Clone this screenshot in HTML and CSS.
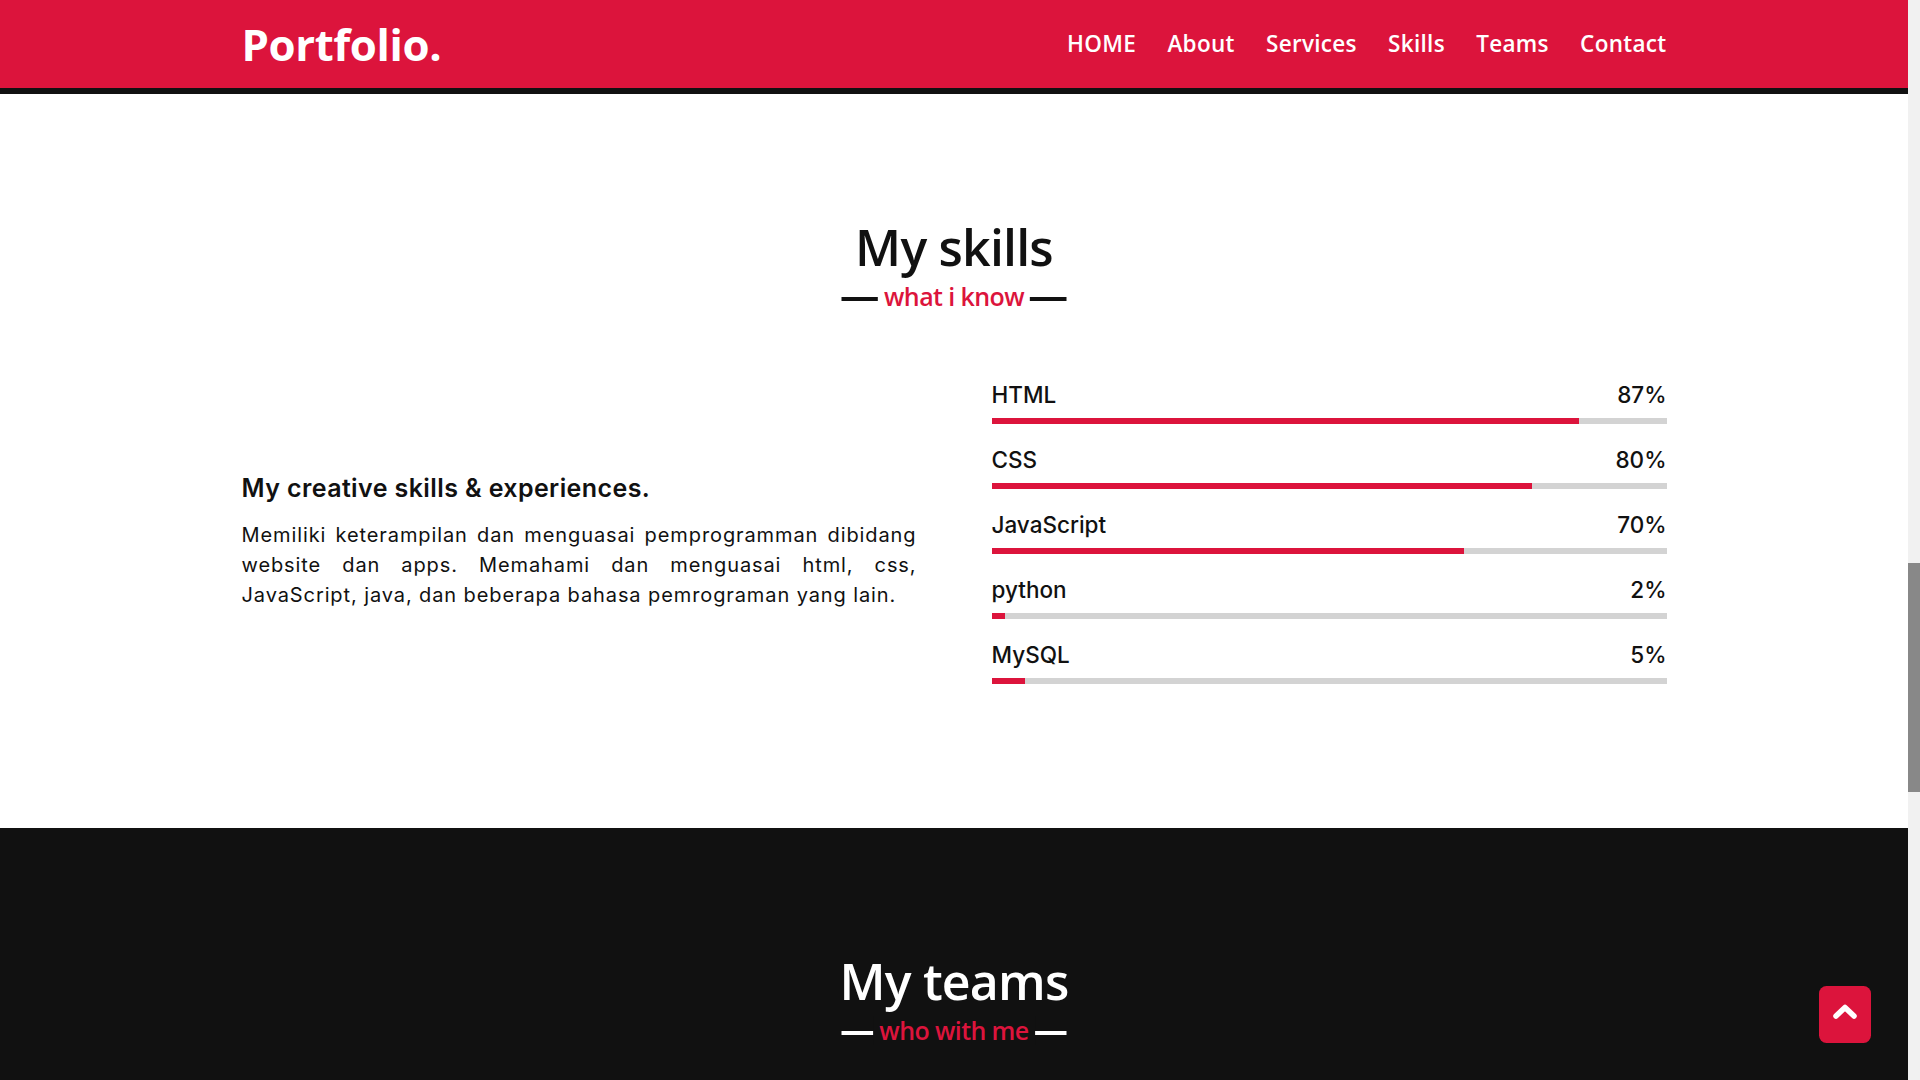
FILE: index.html
```html
<!DOCTYPE html>
<html lang="id">
<head>
<meta charset="utf-8">
<title>Portfolio</title>
<link rel="stylesheet" href="styles.css">
</head>
<body>
<div class="page">
  <nav class="navbar">
    <div class="max-width nav-inner">
      <a class="logo" href="#">Portfolio.</a>
      <ul class="menu">
        <li><a href="#">HOME</a></li>
        <li><a href="#">About</a></li>
        <li><a href="#">Services</a></li>
        <li><a href="#">Skills</a></li>
        <li><a href="#">Teams</a></li>
        <li><a href="#">Contact</a></li>
      </ul>
    </div>
  </nav>

  <section class="skills">
    <div class="max-width">
      <h2 class="title skills-title">My skills</h2>
      <div class="skills-content">
        <div class="column left">
          <div class="text">My creative skills &amp; experiences.</div>
          <p>Memiliki keterampilan dan menguasai pemprogramman dibidang website dan apps. Memahami dan menguasai html, css, JavaScript, java, dan beberapa bahasa pemrograman yang lain.</p>
        </div>
        <div class="column right">
          <div class="bars">
            <div class="info"><span>HTML</span><span>87%</span></div>
            <div class="line"><div class="fill" style="width:87%"></div></div>
          </div>
          <div class="bars">
            <div class="info"><span>CSS</span><span>80%</span></div>
            <div class="line"><div class="fill" style="width:80%"></div></div>
          </div>
          <div class="bars">
            <div class="info"><span>JavaScript</span><span>70%</span></div>
            <div class="line"><div class="fill" style="width:70%"></div></div>
          </div>
          <div class="bars">
            <div class="info"><span>python</span><span>2%</span></div>
            <div class="line"><div class="fill" style="width:2%"></div></div>
          </div>
          <div class="bars">
            <div class="info"><span>MySQL</span><span>5%</span></div>
            <div class="line"><div class="fill" style="width:5%"></div></div>
          </div>
        </div>
      </div>
    </div>
  </section>

  <section class="teams">
    <div class="max-width">
      <h2 class="title teams-title">My teams</h2>
    </div>
  </section>
</div>

<div class="scrollbar"><div class="thumb"></div></div>

<a class="scroll-up" href="#">
  <svg width="52.5" height="56.25" viewBox="0 0 52.5 56.25" aria-hidden="true">
    <polyline points="17,30 26,21.5 35,30" fill="none" stroke="#fff" stroke-width="5.5" stroke-linecap="round" stroke-linejoin="round"/>
  </svg>
</a>
</body>
</html>
```

FILE: styles.css
```css
* {
  margin: 0;
  padding: 0;
  box-sizing: border-box;
}

html, body {
  height: 100%;
}

body {
  font-family: "Inter", "Noto Sans", sans-serif;
  color: #111;
  background: #fff;
  overflow: hidden;
  padding-right: 12px;
}

.max-width {
  max-width: 1625px;
  padding: 0 100px;
  margin: 0 auto;
}

/* NAVBAR */
.navbar {
  background: #dc143c;
  padding: 18.75px 0;
  border-bottom: 6.25px solid #111;
  font-family: "Open Sans", "Noto Sans", sans-serif;
}

.nav-inner {
  display: flex;
  align-items: center;
  justify-content: space-between;
}

.logo {
  color: #fff;
  font-size: 43.75px;
  font-weight: 700;
  line-height: 50px;
  text-decoration: none;
  letter-spacing: -0.4px;
}

.menu {
  display: flex;
  list-style: none;
}

.menu a {
  display: block;
  color: #fff;
  font-size: 22.5px;
  font-weight: 600;
  margin-left: 31.25px;
  text-decoration: none;
  letter-spacing: 0.3px;
}

/* SECTIONS */
section {
  padding: 125px 0;
}

.title {
  position: relative;
  text-align: center;
  font-family: "Open Sans", "Noto Sans", sans-serif;
  font-size: 50px;
  font-weight: 600;
  line-height: 57.5px;
  margin-bottom: 76.5px;
  padding-bottom: 25px;
  letter-spacing: -0.8px;
}

.title::before {
  content: "";
  position: absolute;
  bottom: 0;
  left: 50%;
  width: 225px;
  height: 3.75px;
  background: #111;
  transform: translateX(-50%);
}

.title::after {
  position: absolute;
  bottom: -10px;
  left: 50%;
  font-size: 25px;
  line-height: 28.75px;
  font-weight: 600;
  color: #dc143c;
  padding: 0 6.25px;
  background: #fff;
  transform: translateX(-50%);
  white-space: nowrap;
  letter-spacing: -0.6px;
}

.skills-title::after {
  content: "what i know";
}

/* SKILLS */
.skills-content {
  display: flex;
  align-items: center;
  justify-content: space-between;
}

.column {
  width: calc(50% - 37.5px);
}

.left .text {
  font-size: 25px;
  font-weight: 600;
  line-height: 37.5px;
  margin-bottom: 12.5px;
  letter-spacing: 0.4px;
}

.left p {
  font-size: 20px;
  line-height: 30px;
  text-align: justify;
  letter-spacing: 0.9px;
}

.bars {
  margin-bottom: 18.75px;
}

.info {
  display: flex;
  justify-content: space-between;
  align-items: center;
  margin-bottom: 6.25px;
}

.info span {
  font-size: 22.5px;
  font-weight: 500;
  line-height: 33.75px;
}

.line {
  height: 6.25px;
  background: #d3d3d3;
}

.fill {
  height: 100%;
  background: #dc143c;
}

/* TEAMS */
.teams {
  background: #111;
  color: #fff;
  min-height: 600px;
}

.teams .title::before {
  background: #fff;
}

.teams-title::after {
  content: "who with me";
  background: #111;
}

/* FAKE SCROLLBAR */
.scrollbar {
  position: fixed;
  top: 0;
  right: 0;
  width: 12px;
  height: 100%;
  background: #f1f1f1;
}

.thumb {
  margin-top: 563px;
  height: 229px;
  background: #888;
}

/* SCROLL UP BUTTON */
.scroll-up {
  position: fixed;
  right: 49px;
  bottom: 37.5px;
  width: 52.5px;
  height: 56.25px;
  background: #dc143c;
  border-radius: 7.5px;
  display: block;
}

.scroll-up svg {
  display: block;
}
```
